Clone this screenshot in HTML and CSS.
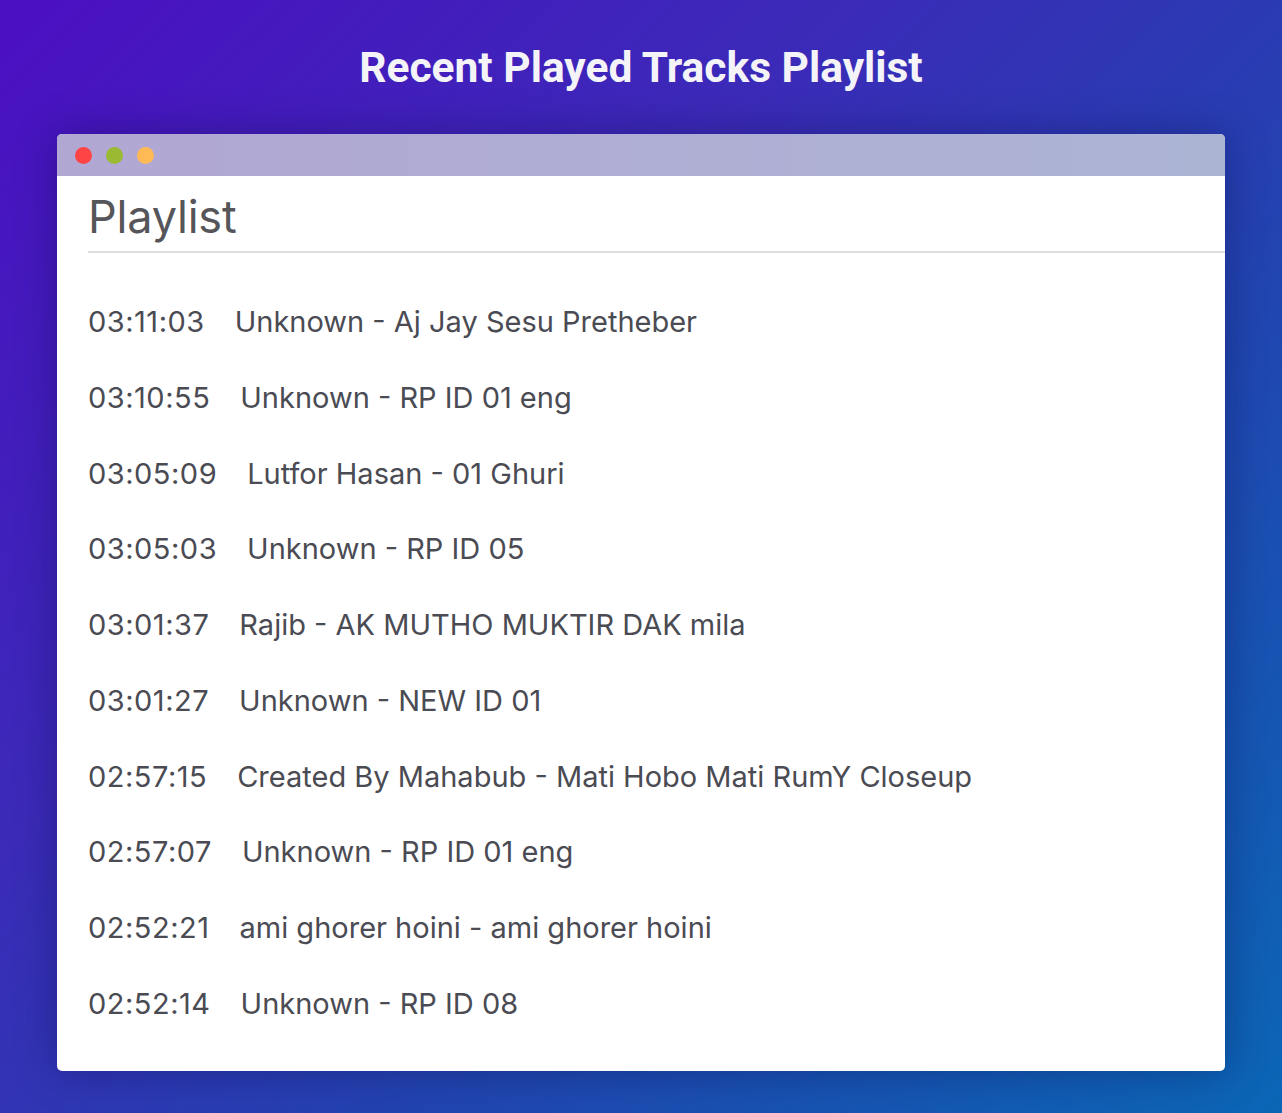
FILE: index.html
```html
<!DOCTYPE html>
<html>
<head>
<meta charset="utf-8">
<link rel="stylesheet" href="styles.css">
</head>
<body>
<h1 class="page-title">Recent Played Tracks Playlist</h1>
<div class="window">
  <div class="titlebar">
    <span class="dot dot-red"></span>
    <span class="dot dot-green"></span>
    <span class="dot dot-yellow"></span>
  </div>
  <div class="content">
    <h2 class="heading">Playlist</h2>
    <ul class="tracks">
      <li><span class="time">03:11:03</span><span class="name">Unknown - Aj Jay Sesu Pretheber</span></li>
      <li><span class="time">03:10:55</span><span class="name">Unknown - RP ID 01 eng</span></li>
      <li><span class="time">03:05:09</span><span class="name">Lutfor Hasan - 01 Ghuri</span></li>
      <li><span class="time">03:05:03</span><span class="name">Unknown - RP ID 05</span></li>
      <li><span class="time">03:01:37</span><span class="name">Rajib - AK MUTHO MUKTIR DAK mila</span></li>
      <li><span class="time">03:01:27</span><span class="name">Unknown - NEW ID 01</span></li>
      <li><span class="time">02:57:15</span><span class="name">Created By Mahabub - Mati Hobo Mati RumY Closeup</span></li>
      <li><span class="time">02:57:07</span><span class="name">Unknown - RP ID 01 eng</span></li>
      <li><span class="time">02:52:21</span><span class="name">ami ghorer hoini - ami ghorer hoini</span></li>
      <li><span class="time">02:52:14</span><span class="name">Unknown - RP ID 08</span></li>
    </ul>
  </div>
</div>
</body>
</html>
```

FILE: styles.css
```css
html, body {
  margin: 0;
  padding: 0;
}
body {
  width: 1282px;
  height: 1113px;
  overflow: hidden;
  background: linear-gradient(135deg, #4b0fc2 0%, #3b2ab8 35%, #2145b0 65%, #0b66b6 100%);
  font-family: Inter, "Noto Sans", sans-serif;
  display: flex;
  flex-direction: column;
}
.page-title {
  margin: 0;
  padding-top: 44px;
  height: 90px;
  box-sizing: border-box;
  text-align: center;
  font-family: Roboto, "Liberation Sans", sans-serif;
  font-weight: 700;
  font-size: 42.5px;
  line-height: 48px;
  color: #f4f4f8;
}
.window {
  margin: 44px 57px 0 57px;
  height: 937px;
  border-radius: 5px;
  overflow: hidden;
  background: #ffffff;
  box-shadow: 0 0 40px rgba(10, 10, 60, 0.35);
  display: flex;
  flex-direction: column;
}
.titlebar {
  height: 42px;
  flex: none;
  background: linear-gradient(90deg, #b1a7d3, #acb4d4);
  display: flex;
  align-items: center;
  gap: 14px;
  padding-left: 18px;
}
.dot {
  width: 17px;
  height: 17px;
  border-radius: 50%;
}
.dot-red { background: #ff4445; }
.dot-green { background: #9aba34; }
.dot-yellow { background: #ffb955; }
.content {
  padding-left: 31px;
}
.heading {
  margin: 0;
  padding-top: 15px;
  height: 77px;
  box-sizing: border-box;
  font-weight: 400;
  font-size: 45px;
  line-height: 52px;
  color: #55555a;
  border-bottom: 2px solid #dedede;
  letter-spacing: -0.2px;
}
.tracks {
  list-style: none;
  margin: 0;
  padding: 51px 0 0 0;
}
.tracks li {
  height: 75.75px;
  display: flex;
  align-items: flex-start;
  font-size: 29px;
  line-height: 36px;
  color: #4a4b53;
}
.time {
  margin-right: 30px;
  letter-spacing: 0.5px;
}
```
